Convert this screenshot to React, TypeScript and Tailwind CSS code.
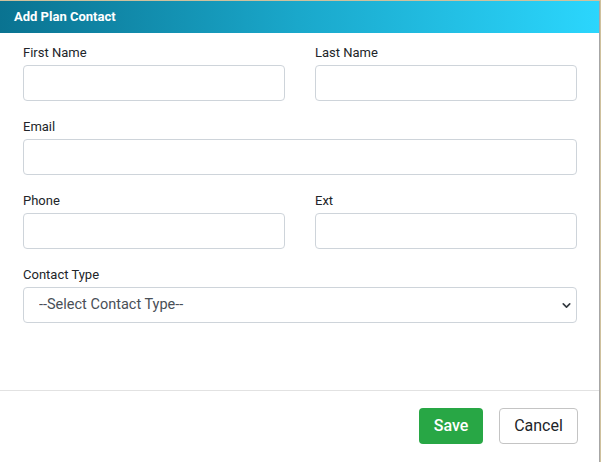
import { ChevronDown } from 'lucide-react';

function Field({ label, className = '' }: { label: string; className?: string }) {
  return (
    <div className={`flex flex-col ${className}`}>
      <label className="text-[13px] leading-[19px] text-[#212529] mb-[3px]">{label}</label>
      <input
        type="text"
        className="h-[36px] w-full rounded-[4px] border border-[#ced4da] bg-white px-3 text-[16px] text-[#495057] outline-none"
      />
    </div>
  );
}

export default function App() {
  return (
    <div className="h-[462px] w-[601px] bg-[#cfc19d] pt-[1px] pr-[1px] font-['Roboto',sans-serif]">
      <div className="flex h-[461px] w-[600px] flex-col border-r border-[#a6a6a6] bg-white">
        <div className="flex h-[32px] items-center bg-gradient-to-r from-[#0a7391] via-[#1aa8cb] to-[#2bd6fd] px-[14px]">
          <h2 className="text-[13px] font-bold text-white">Add Plan Contact</h2>
        </div>

        <div className="flex flex-1 flex-col gap-[16px] pl-[23px] pr-[22px] pt-[10px]">
          <div className="grid grid-cols-2 gap-[30px]">
            <Field label="First Name" />
            <Field label="Last Name" />
          </div>
          <Field label="Email" />
          <div className="grid grid-cols-2 gap-[30px]">
            <Field label="Phone" />
            <Field label="Ext" />
          </div>
          <div className="flex flex-col">
            <label className="text-[13px] leading-[19px] text-[#212529] mb-[3px]">Contact Type</label>
            <div className="relative">
              <select className="h-[36px] w-full appearance-none rounded-[4px] border border-[#ced4da] bg-white pl-[15px] text-[14.5px] text-[#495057] outline-none">
                <option>--Select Contact Type--</option>
              </select>
              <ChevronDown
                size={13}
                strokeWidth={3}
                className="pointer-events-none absolute right-[4px] top-[12px] text-[#343a40]"
              />
            </div>
          </div>
        </div>

        <div className="flex h-[72px] items-start justify-end gap-[16px] border-t border-[#e2e2e2] pr-[21px] pt-[17px]">
          <button className="h-[36px] w-[64px] rounded-[4px] bg-[#28a745] text-[16px] font-medium text-white">
            Save
          </button>
          <button className="h-[36px] w-[79px] rounded-[4px] border border-[#c4c4c4] bg-white text-[16px] text-[#212529]">
            Cancel
          </button>
        </div>
      </div>
    </div>
  );
}
